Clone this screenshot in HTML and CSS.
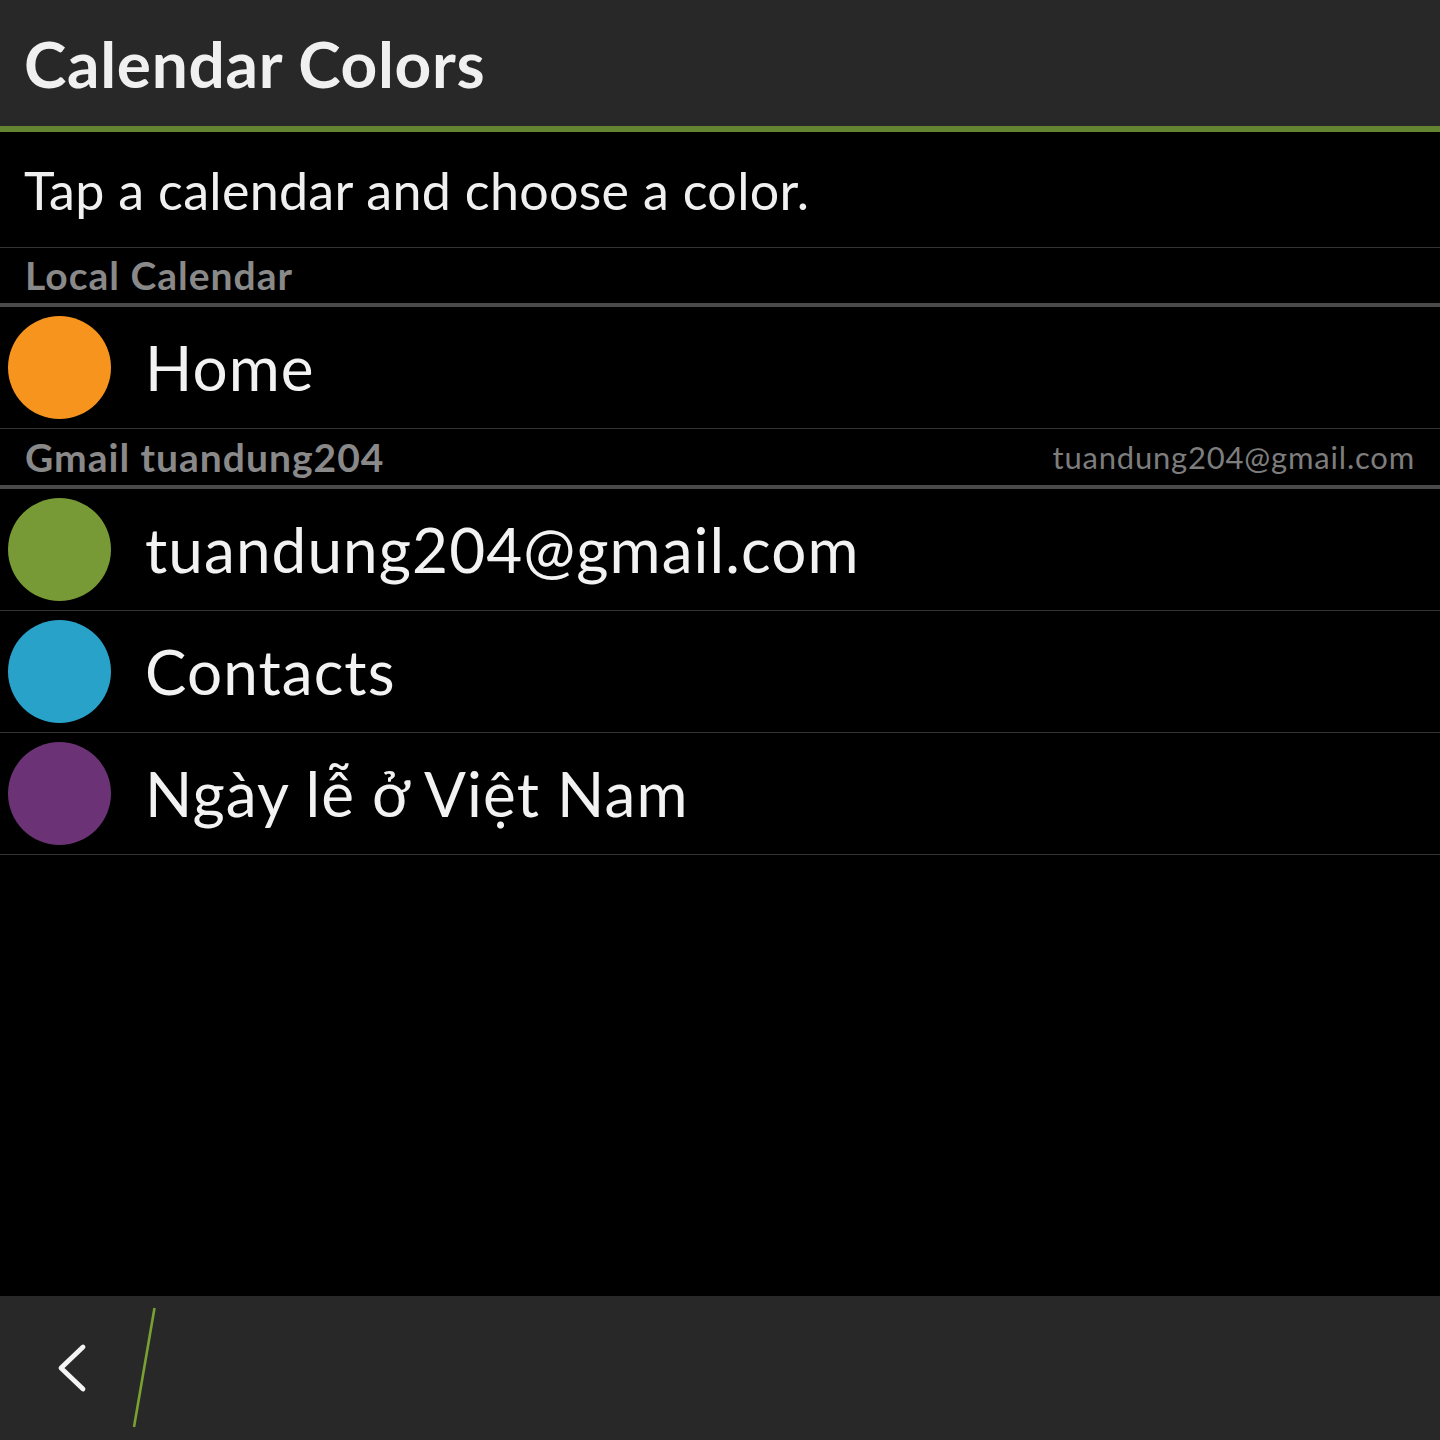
FILE: index.html
```html
<!DOCTYPE html>
<html lang="vi">
<head>
<meta charset="utf-8">
<title>Calendar Colors</title>
<link rel="stylesheet" href="styles.css">
</head>
<body>
<div class="app">
  <header class="titlebar">
    <h1 class="title">Calendar Colors</h1>
  </header>
  <main class="content">
    <div class="intro">Tap a calendar and choose a color.</div>
    <div class="section-head"><span class="section-name">Local Calendar</span></div>
    <div class="row"><span class="dot dot-orange"></span><span class="row-label">Home</span></div>
    <div class="section-head section-head-2"><span class="section-name">Gmail tuandung204</span><span class="section-sub">tuandung204@gmail.com</span></div>
    <div class="row"><span class="dot dot-green"></span><span class="row-label">tuandung204@gmail.com</span></div>
    <div class="row"><span class="dot dot-blue"></span><span class="row-label">Contacts</span></div>
    <div class="row"><span class="dot dot-purple"></span><span class="row-label">Ngày lễ ở Việt Nam</span></div>
  </main>
  <footer class="actionbar">
    <svg class="actionbar-svg" width="170" height="144" viewBox="0 0 170 144" aria-label="Back">
      <polyline points="83,51 61,72 83,93" fill="none" stroke="#f4f4f4" stroke-width="4.8" stroke-linecap="round" stroke-linejoin="round"/>
      <line x1="154.5" y1="12" x2="134" y2="131" stroke="#78a032" stroke-width="2.6"/>
    </svg>
  </footer>
</div>
</body>
</html>
```

FILE: styles.css
```css
html, body {
  margin: 0;
  padding: 0;
  background: #000;
}
body {
  font-family: Lato, "Open Sans", "Noto Sans", sans-serif;
  color: #f0f0f0;
}
.app {
  width: 1440px;
  height: 1440px;
  display: flex;
  flex-direction: column;
  overflow: hidden;
}
.titlebar {
  height: 126px;
  background: #282828;
  border-bottom: 6px solid #638430;
  display: flex;
  align-items: center;
  padding-left: 24px;
  flex-shrink: 0;
}
.title {
  margin: 0;
  font-size: 64px;
  font-weight: 700;
  line-height: 1;
  color: #f0f0f0;
  letter-spacing: 0.7px;
  padding-top: 2px;
}
.content {
  flex: 1;
  display: flex;
  flex-direction: column;
  background: #000;
}
.intro {
  height: 116px;
  border-bottom: 1px solid #333;
  display: flex;
  align-items: center;
  padding-left: 24px;
  font-size: 52px;
  letter-spacing: 0.3px;
  line-height: 1;
  color: #f0f0f0;
  padding-top: 1px;
  box-sizing: border-box;
  flex-shrink: 0;
}
.section-head {
  height: 55px;
  border-bottom: 4px solid #4a4a4a;
  display: flex;
  align-items: center;
  justify-content: space-between;
  padding: 0 25px;
  flex-shrink: 0;
}
.section-head-2 {
  height: 56px;
}
.section-name {
  font-size: 39px;
  font-weight: 700;
  color: #898989;
  letter-spacing: 1px;
  line-height: 1;
}
.section-sub {
  font-size: 31px;
  color: #7d7d7d;
  line-height: 1;
  letter-spacing: 0.8px;
}
.row {
  height: 121px;
  border-bottom: 1px solid #333;
  display: flex;
  align-items: center;
  padding-left: 8px;
  flex-shrink: 0;
}
.dot {
  width: 103px;
  height: 103px;
  border-radius: 50%;
  flex-shrink: 0;
}
.dot-orange { background: #f7941e; }
.dot-green { background: #779a36; }
.dot-blue { background: #29a2c9; }
.dot-purple { background: #6b3276; }
.row-label {
  margin-left: 34px;
  font-size: 62px;
  letter-spacing: 1.1px;
  line-height: 1;
  color: #f2f2f2;
  padding-bottom: 2px;
}
.actionbar {
  height: 144px;
  background: #282828;
  display: flex;
  align-items: center;
  flex-shrink: 0;
}
.actionbar-svg {
  display: block;
}
```
